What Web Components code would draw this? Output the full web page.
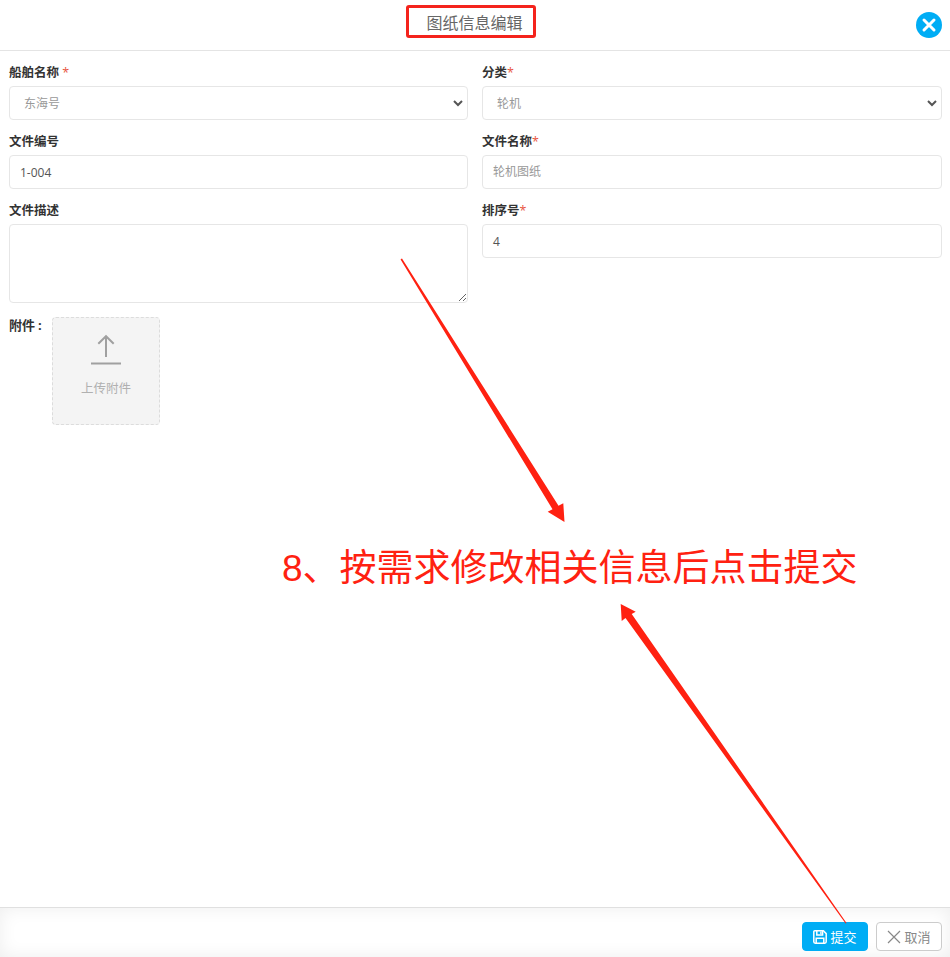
<!DOCTYPE html>
<html lang="zh">
<head>
<meta charset="utf-8">
<title>图纸信息编辑</title>
<style>
html, body { margin: 0; padding: 0; background: #fff; }
body { font-family: "Open Sans", "Noto Sans CJK SC", sans-serif; color: #333; }
</style>
</head>
<body>
<edit-page>
  <dialog-header slot="header">图纸信息编辑</dialog-header>

  <form-field label="船舶名称" mark=" *"><select-box value="东海号"></select-box></form-field>
  <form-field label="分类" mark="*"><select-box value="轮机"></select-box></form-field>
  <form-field label="文件编号"><text-box>1-004</text-box></form-field>
  <form-field label="文件名称" mark="*"><text-box muted>轮机图纸</text-box></form-field>
  <form-field label="文件描述"><area-box></area-box></form-field>
  <form-field label="排序号" mark="*"><text-box>4</text-box></form-field>

  <upload-row slot="after"></upload-row>

  <dialog-footer slot="footer">
    <action-button primary>
      <svg slot="icon" width="14" height="14" viewBox="0 0 14 14" fill="none" stroke="#fff" stroke-width="1.5"><path d="M1.8 .8H10.4L13.2 3.6V11.8A1.4 1.4 0 0 1 11.8 13.2H2.2A1.4 1.4 0 0 1 .8 11.8V1.8A1 1 0 0 1 1.8 .8Z"/><path d="M3.8 1V5H9.6V1"/><path d="M3.2 13V8.2H10.8V13"/><path stroke-width="1.4" d="M7.9 1.6V4"/></svg>
      提交
    </action-button>
    <action-button>
      <svg slot="icon" width="14" height="14" viewBox="0 0 14 14"><path fill="none" stroke="#888" stroke-width="1.2" d="M1 1L13 13M13 1L1 13"/></svg>
      取消
    </action-button>
  </dialog-footer>

  <note-layer slot="notes">8、按需求修改相关信息后点击提交</note-layer>
</edit-page>

<script>
class EditPage extends HTMLElement {
  constructor() {
    super();
    this.attachShadow({ mode: 'open' });
    this.shadowRoot.innerHTML = `
    <style>
      :host { display: flex; flex-direction: column; position: relative; height: 957px; overflow: hidden; background: #fff; }
      .grid { display: grid; grid-template-columns: 459px 460px; column-gap: 14px; row-gap: 11px; padding: 11px 8px 0 9px; }
      .after { padding: 14px 8px 0 9px; flex: 1; }
    </style>
    <slot name="header"></slot>
    <div class="grid"><slot></slot></div>
    <div class="after"><slot name="after"></slot></div>
    <slot name="footer"></slot>
    <slot name="notes"></slot>
    `;
  }
}

class DialogHeader extends HTMLElement {
  constructor() {
    super();
    this.attachShadow({ mode: 'open' });
    this.shadowRoot.innerHTML = `
    <style>
      :host { display: flex; align-items: center; justify-content: center; position: relative; height: 50px; border-bottom: 1px solid #e4e4e4; font-size: 16px; color: #666; }
      .title { position: relative; top: -3px; left: -.5px; }
      .close { position: absolute; left: 916px; top: 12px; width: 26px; height: 26px; }
    </style>
    <span class="title"><slot></slot></span>
    <svg class="close" viewBox="0 0 26 26">
      <circle cx="13" cy="13" r="13" fill="#00adf5"/>
      <path d="M8 8L18 18M18 8L8 18" stroke="#fff" stroke-width="3" stroke-linecap="round"/>
    </svg>
    `;
  }
}

class FormField extends HTMLElement {
  constructor() {
    super();
    this.attachShadow({ mode: 'open' });
  }
  connectedCallback() {
    const mark = this.getAttribute('mark');
    this.shadowRoot.innerHTML = `
    <style>
      :host { display: block; min-width: 0; }
      .label { display: block; height: 20px; line-height: 22px; margin-bottom: 4px; font-size: 12.5px; font-weight: 700; color: #333; white-space: pre; }
      .mark { color: #e8553f; font-weight: 400; }
    </style>
    <span class="label">${this.getAttribute('label')}${mark ? `<span class="mark">${mark}</span>` : ''}</span>
    <slot></slot>
    `;
  }
}

class SelectBox extends HTMLElement {
  constructor() {
    super();
    this.attachShadow({ mode: 'open' });
  }
  connectedCallback() {
    this.shadowRoot.innerHTML = `
    <style>
      :host { display: block; position: relative; }
      select { display: block; width: 100%; height: 34px; box-sizing: border-box; padding: 0 14px; border: 1px solid #e6e6e6; border-radius: 4px; background: #fff; font: 12px "Open Sans", "Noto Sans CJK SC", sans-serif; color: #999; outline: none; appearance: none; }
      svg { position: absolute; right: 5px; top: 14px; }
    </style>
    <select><option>${this.getAttribute('value')}</option></select>
    <svg width="10" height="7" viewBox="0 0 10 7"><path d="M1 1L5 5L9 1" fill="none" stroke="#555" stroke-width="2"/></svg>
    `;
  }
}

class TextBox extends HTMLElement {
  constructor() {
    super();
    this.attachShadow({ mode: 'open' });
    this.shadowRoot.innerHTML = `
    <style>
      :host { display: block; height: 34px; box-sizing: border-box; padding: 0 10px; line-height: 34px; border: 1px solid #e6e6e6; border-radius: 4px; background: #fff; font-size: 12px; color: #555; }
      :host([muted]) { line-height: 32px; color: #999; }
    </style>
    <slot></slot>
    `;
  }
}

class AreaBox extends HTMLElement {
  constructor() {
    super();
    this.attachShadow({ mode: 'open' });
    this.shadowRoot.innerHTML = `
    <style>
      :host { display: block; }
      textarea { display: block; width: 100%; height: 79px; box-sizing: border-box; padding: 6px 10px; border: 1px solid #e6e6e6; border-radius: 4px; background: #fff; outline: none; resize: vertical; }
    </style>
    <textarea></textarea>
    `;
  }
}

class UploadRow extends HTMLElement {
  constructor() {
    super();
    this.attachShadow({ mode: 'open' });
    this.shadowRoot.innerHTML = `
    <style>
      :host { display: flex; align-items: flex-start; gap: 10px; }
      .label { width: 33px; height: 20px; line-height: 20px; margin-top: -2px; font-size: 13px; font-weight: 700; color: #333; white-space: nowrap; }
      .label i { font-style: normal; margin-left: 3px; }
      .drop { display: flex; flex-direction: column; align-items: center; width: 108px; height: 108px; box-sizing: border-box; padding-top: 16px; border: 1px dashed #dcdcdc; border-radius: 4px; background: #f4f4f4; font-size: 12.5px; color: #b0b0b0; }
      svg { display: block; margin-bottom: 13px; }
      .text { line-height: 20px; }
    </style>
    <span class="label">附件<i>:</i></span>
    <div class="drop">
      <svg width="32" height="32" viewBox="0 0 32 32" fill="none" stroke="#a0a0a0">
        <path stroke-width="2" d="M1 29.5H31"/>
        <path stroke-width="2" d="M16 23V2.5M8.3 9.8L16 2.2L23.7 9.8"/>
      </svg>
      <span class="text">上传附件</span>
    </div>
    `;
  }
}

class DialogFooter extends HTMLElement {
  constructor() {
    super();
    this.attachShadow({ mode: 'open' });
    this.shadowRoot.innerHTML = `
    <style>
      :host { display: flex; justify-content: flex-end; align-items: flex-start; gap: 8px; height: 50px; padding: 14px 8px 0 0; box-sizing: border-box; border-top: 1px solid #e0e0e0; background: #fff; box-shadow: inset 0 0 18px rgba(0, 0, 0, .07); }
    </style>
    <slot></slot>
    `;
  }
}

class ActionButton extends HTMLElement {
  constructor() {
    super();
    this.attachShadow({ mode: 'open' });
    this.shadowRoot.innerHTML = `
    <style>
      :host { display: flex; align-items: center; justify-content: center; gap: 3px; width: 66px; height: 29px; box-sizing: border-box; border: 1px solid #ccc; border-radius: 4px; background: #fff; font-size: 13px; color: #888; }
      :host([primary]) { border-color: #00adf5; background: #00adf5; color: #fff; }
    </style>
    <slot name="icon"></slot><slot></slot>
    `;
  }
}

class NoteLayer extends HTMLElement {
  constructor() {
    super();
    this.attachShadow({ mode: 'open' });
    this.shadowRoot.innerHTML = `
    <style>
      :host { display: block; position: absolute; inset: 0; pointer-events: none; }
      .box { position: absolute; left: 406px; top: 5px; width: 130px; height: 33px; box-sizing: border-box; border: 3px solid #f4231c; border-radius: 3px; }
      .note { position: absolute; left: 282px; top: 542px; line-height: 54px; font-size: 37px; color: #ff2111; white-space: nowrap; font-family: "Liberation Sans", "Noto Sans CJK SC", sans-serif; }
      svg { position: absolute; left: 0; top: 0; }
    </style>
    <div class="box"></div>
    <span class="note"><slot></slot></span>
    <svg width="950" height="957" viewBox="0 0 950 957">
      <polygon fill="#ff2111" points="401,259 402,258.4 558.5,505.7 563.3,503.3 564.5,522 547.7,511.7 552.5,509.3 400.6,259.4"/>
      <polygon fill="#ff2111" points="620.7,604 635.7,611.7 631.7,614 846.5,923 845.6,923.4 625.5,618 621.7,621"/>
    </svg>
    `;
  }
}

customElements.define('edit-page', EditPage);
customElements.define('dialog-header', DialogHeader);
customElements.define('form-field', FormField);
customElements.define('select-box', SelectBox);
customElements.define('text-box', TextBox);
customElements.define('area-box', AreaBox);
customElements.define('upload-row', UploadRow);
customElements.define('dialog-footer', DialogFooter);
customElements.define('action-button', ActionButton);
customElements.define('note-layer', NoteLayer);
</script>
</body>
</html>
